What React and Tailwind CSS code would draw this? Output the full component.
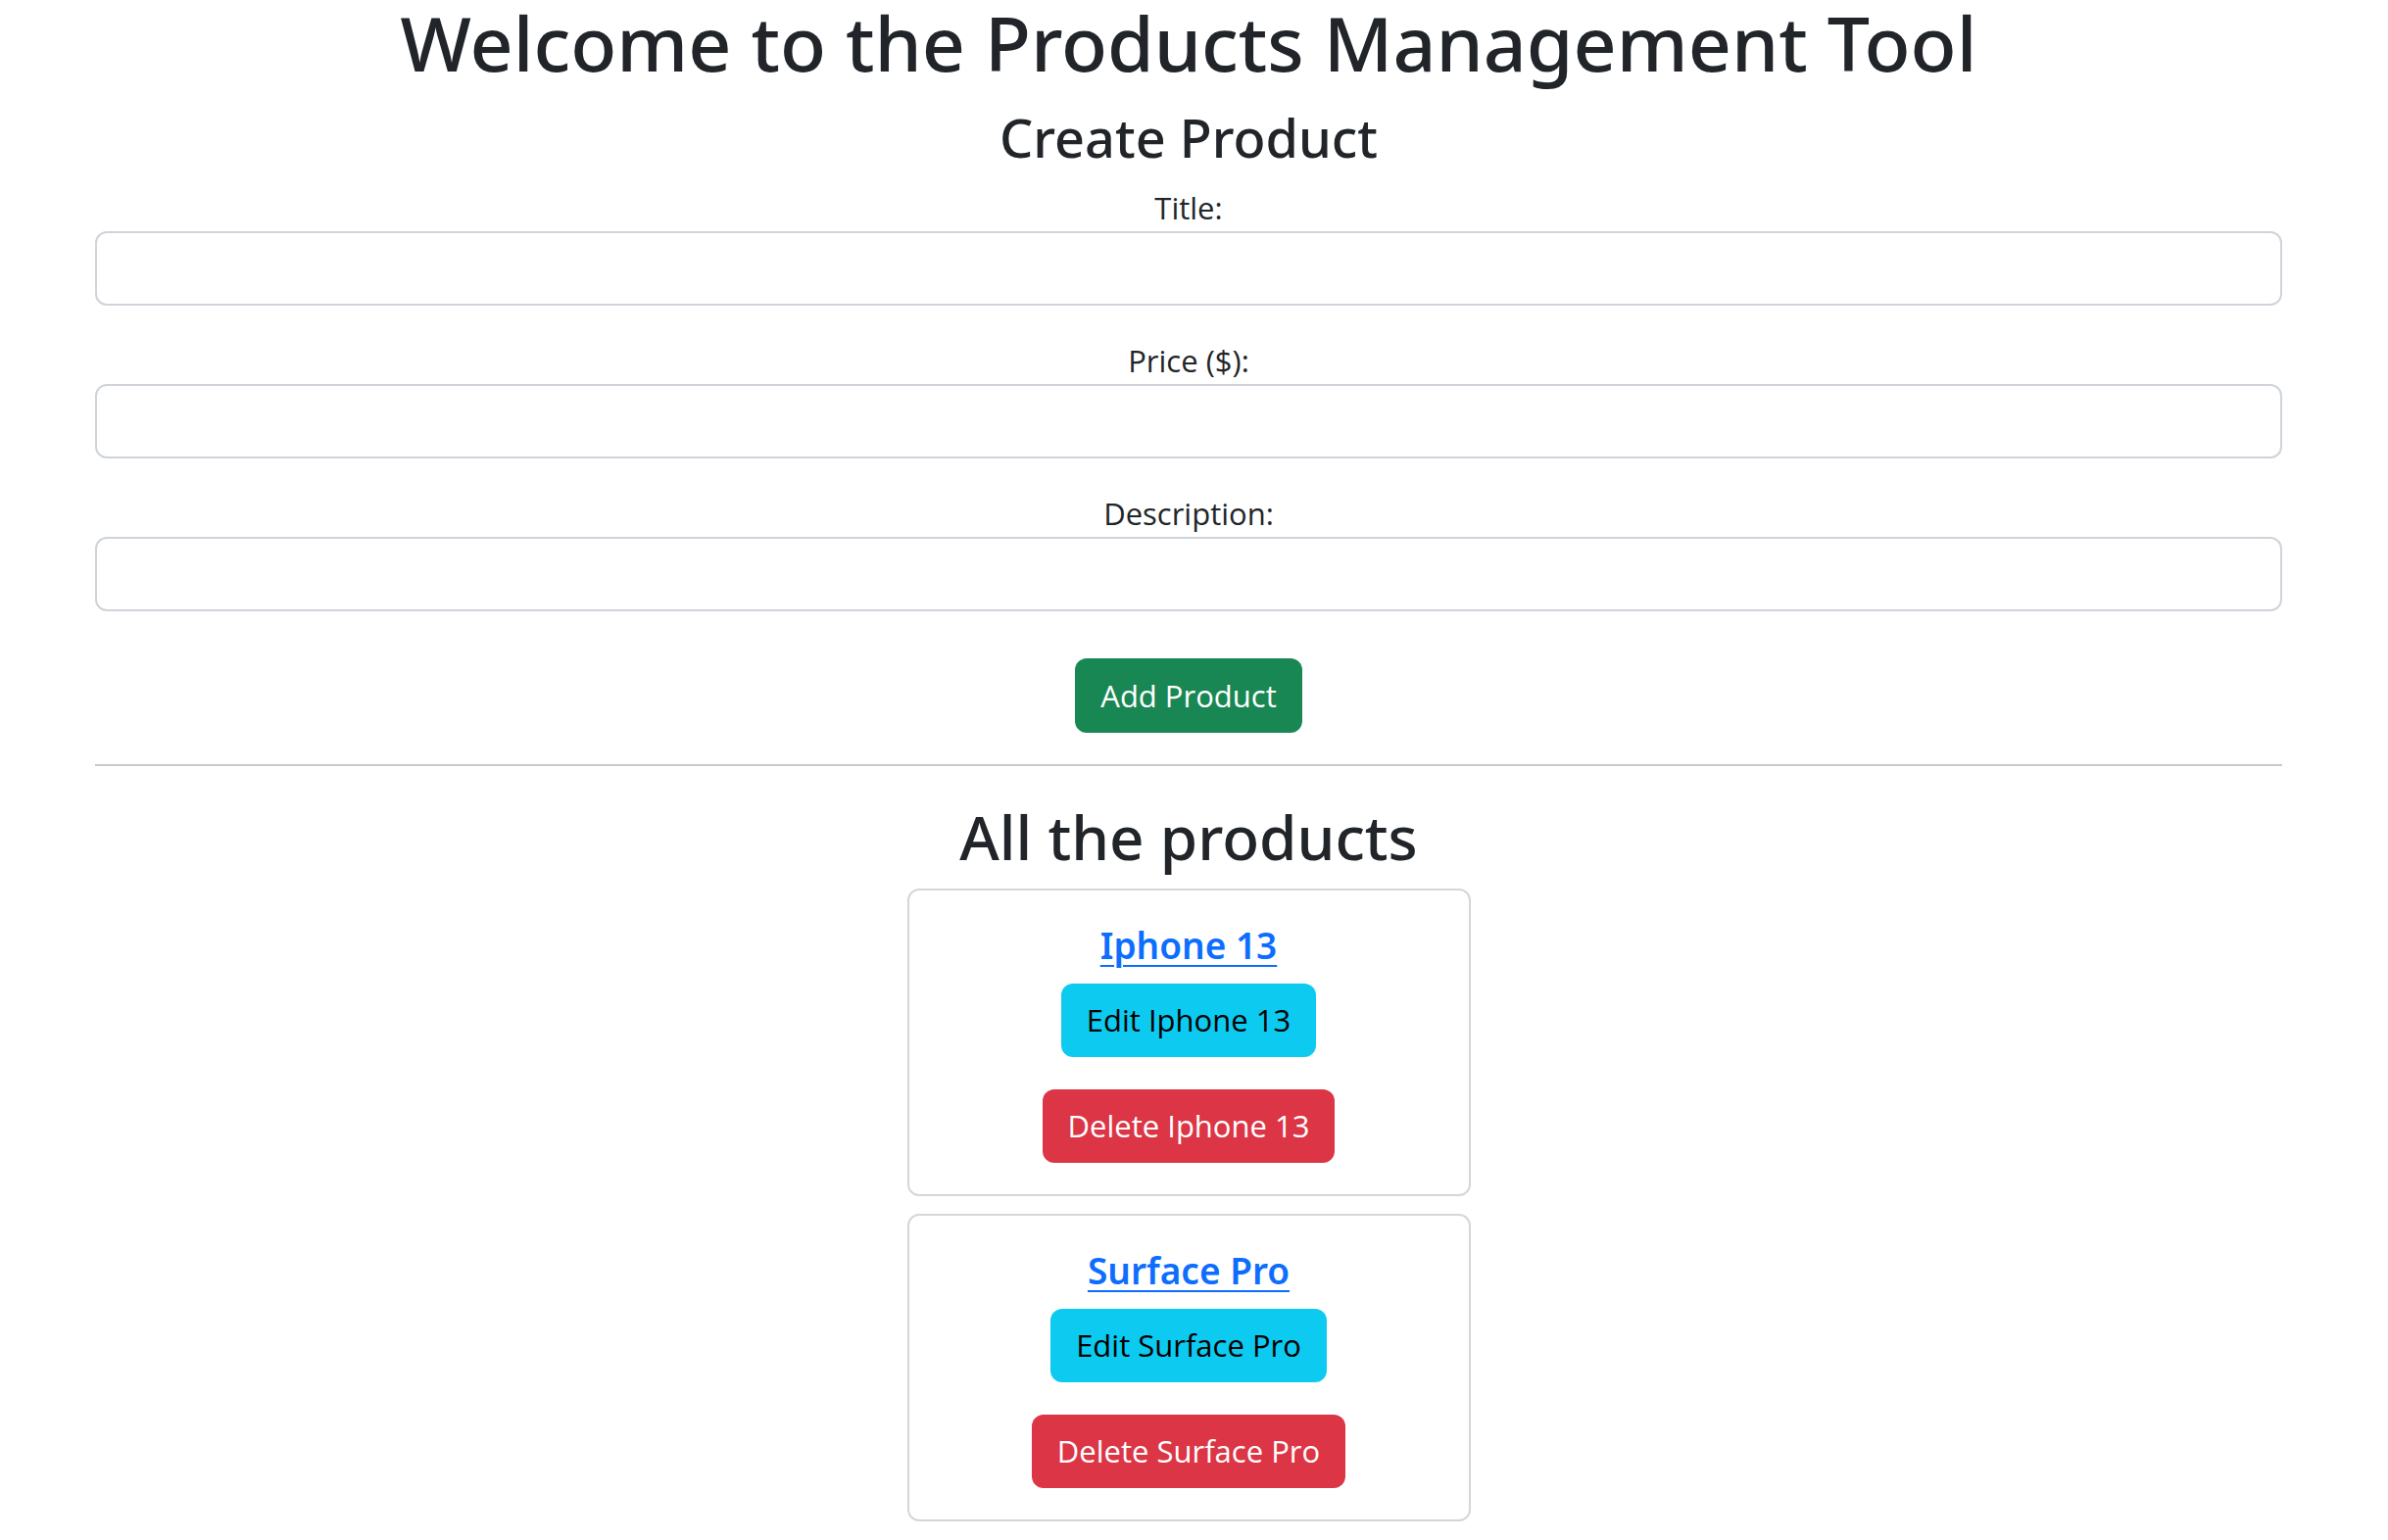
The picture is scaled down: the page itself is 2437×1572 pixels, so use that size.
import React from 'react';

const products = [
  { id: 1, title: 'Iphone 13' },
  { id: 2, title: 'Surface Pro' },
];

function Field({ label }) {
  return (
    <div className="mb-[32px] flex flex-col">
      <label className="text-center text-[31px] leading-[48px]">{label}</label>
      <input
        type="text"
        className="h-[76px] w-full rounded-[12px] border-2 border-[#ced4da] bg-white px-[24px] text-[31px] outline-none"
      />
    </div>
  );
}

function ProductCard({ title }) {
  return (
    <div className="mx-auto mb-[18px] flex w-[575px] flex-col items-center rounded-[12px] border-2 border-[#d6d6d6] pt-[32px] pb-[32px]">
      <a
        href="#"
        className="mb-[15px] font-['Noto_Sans',sans-serif] text-[37px] leading-[48px] font-semibold text-[#0d6efd] underline decoration-2 underline-offset-[6px]"
      >
        {title}
      </a>
      <button className="h-[75px] rounded-[12px] bg-[#0dcaf0] px-[26px] text-[31px] text-black">
        Edit {title}
      </button>
      <button className="mt-[33px] h-[75px] rounded-[12px] bg-[#dc3545] px-[26px] text-[31px] text-white">
        Delete {title}
      </button>
    </div>
  );
}

export default function App() {
  return (
    <div className="min-h-screen overflow-hidden bg-white font-['Open_Sans',sans-serif] text-[#212529]">
      <div className="ml-[97px] flex w-[2232px] flex-col">
        <h1 className="mb-[19px] text-center font-['Noto_Sans',sans-serif] text-[77px] leading-[88px] font-medium">
          Welcome to the Products Management Tool
        </h1>
        <h3 className="mb-[14px] text-center font-['Noto_Sans',sans-serif] text-[54px] leading-[67px] font-medium">
          Create Product
        </h3>
        <Field label="Title:" />
        <Field label="Price ($):" />
        <Field label="Description:" />
        <div className="mt-[16px] mb-[32px] flex justify-center">
          <button className="h-[76px] rounded-[12px] bg-[#198754] px-[26px] text-[31px] text-white">
            Add Product
          </button>
        </div>
        <hr className="mb-[34px] border-t-2 border-[#c8c9ca]" />
        <h2 className="mb-[14px] text-center font-['Noto_Sans',sans-serif] text-[62px] leading-[77px] font-medium">
          All the products
        </h2>
        {products.map((p) => (
          <ProductCard key={p.id} title={p.title} />
        ))}
      </div>
    </div>
  );
}
